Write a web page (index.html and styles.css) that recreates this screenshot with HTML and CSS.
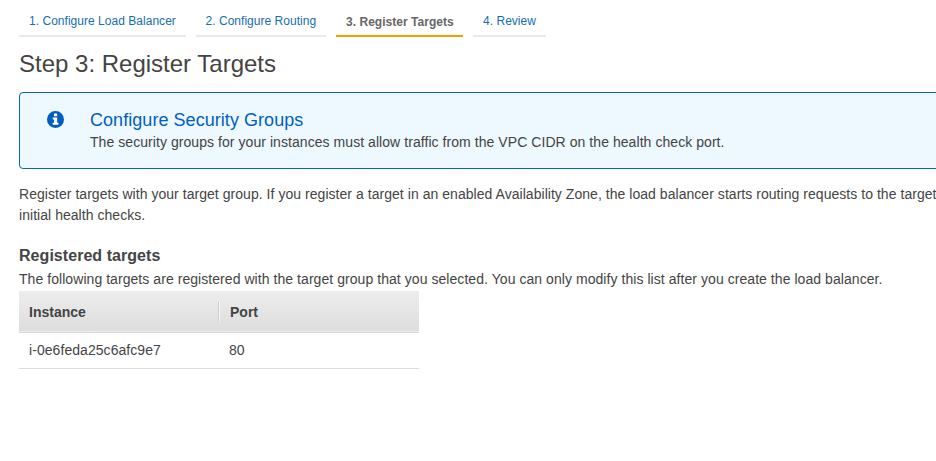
FILE: index.html
```html
<!DOCTYPE html>
<html lang="en">
<head>
<meta charset="utf-8">
<title>Register Targets</title>
<link rel="stylesheet" href="styles.css">
</head>
<body>
<nav class="steps">
  <a class="step step-one"><span class="label">1. Configure Load Balancer</span></a>
  <a class="step step-two"><span class="label">2. Configure Routing</span></a>
  <a class="step step-three active"><span class="label">3. Register Targets</span></a>
  <a class="step step-four"><span class="label">4. Review</span></a>
</nav>
<main>
  <h1><span class="label">Step 3: Register Targets</span></h1>
  <section class="notice">
    <svg class="info" viewBox="0 0 17 17"><circle cx="8.5" cy="8.5" r="8.5"/><path d="M7 2.6h3.2v2.6H7zM5.8 6.5h4.4v5.2h1.3v2H5.6v-2H7V8.4H5.8z"/></svg>
    <div>
      <h2><span class="label">Configure Security Groups</span></h2>
      <p class="message"><span class="label">The security groups for your instances must allow traffic from the VPC CIDR on the health check port.</span></p>
    </div>
  </section>
  <p class="intro"><span class="label">Register targets with your target group. If you register a target in an enabled Availability Zone, the load balancer starts routing requests to the target</span><br><span class="label">initial health checks.</span></p>
  <h3><span class="label">Registered targets</span></h3>
  <p class="desc"><span class="label">The following targets are registered with the target group that you selected. You can only modify this list after you create the load balancer.</span></p>
  <div class="table">
    <div class="row head"><div class="cell">Instance</div><div class="divider"></div><div class="cell port">Port</div></div>
    <div class="row"><div class="cell id">i-0e6feda25c6afc9e7</div><div class="cell">80</div></div>
  </div>
</main>
</body>
</html>
```
FILE: styles.css
```css
* { box-sizing: border-box; }
body { margin: 0; background: #fff; color: #444; font: 14px/21px "Liberation Sans", Arial, sans-serif; overflow: hidden; height: 461px; }
h1, h2, h3, p { margin: 0; font-weight: normal; }
.label { white-space: nowrap; }
.steps { display: flex; gap: 10px; padding-left: 19px; height: 37px; }
.step { height: 37px; padding: 11px 0 0 10px; border-bottom: 2px solid #eaeaea; color: #146eb4; font-size: 12px; letter-spacing: 0.03px; }
.step-one { width: 167px; }
.step-two { width: 130px; padding-left: 9.5px; }
.step-three { width: 127px; }
.step-four { width: 73px; }
.active { color: #666; font-weight: bold; border-color: #f90; padding-top: 12px; }
main { padding-left: 19px; }
h1 { font-size: 24px; line-height: 30px; padding-top: 12px; height: 55px; }
.notice { display: flex; width: 940px; height: 77px; border: 1px solid #0a62b8; border-radius: 4px; background: #edf8ff; padding: 15px 0 0 27px; }
.info { width: 17px; height: 17px; margin: 2.5px 26px 0 0; fill: #005dc2; }
.info path { fill: #fff; }
h2 { color: #0060bf; font-size: 18px; line-height: 24px; letter-spacing: 0.05px; }
.message { letter-spacing: 0.06px; }
.intro { padding-top: 15px; height: 75px; letter-spacing: 0.042px; }
h3 { font-size: 16px; font-weight: bold; line-height: 24px; letter-spacing: 0.05px; }
.desc { height: 23px; padding-top: 1px; letter-spacing: 0.057px; }
.table { width: 400px; }
.row { display: flex; height: 36px; border-bottom: 1px solid #ddd; line-height: 35px; }
.cell { width: 200px; padding-left: 10px; }
.id { letter-spacing: 0.06px; }
.head { height: 42px; border-bottom-color: #d8d8d8; background: linear-gradient(#ededed, #ddd); box-shadow: inset 0 -1px #eee; font-weight: bold; line-height: 42px; }
.head .cell { width: 199px; }
.divider { width: 2px; height: 19px; margin-top: 11px; border-left: 1px solid #ccc; background: #fafafa; }
```
